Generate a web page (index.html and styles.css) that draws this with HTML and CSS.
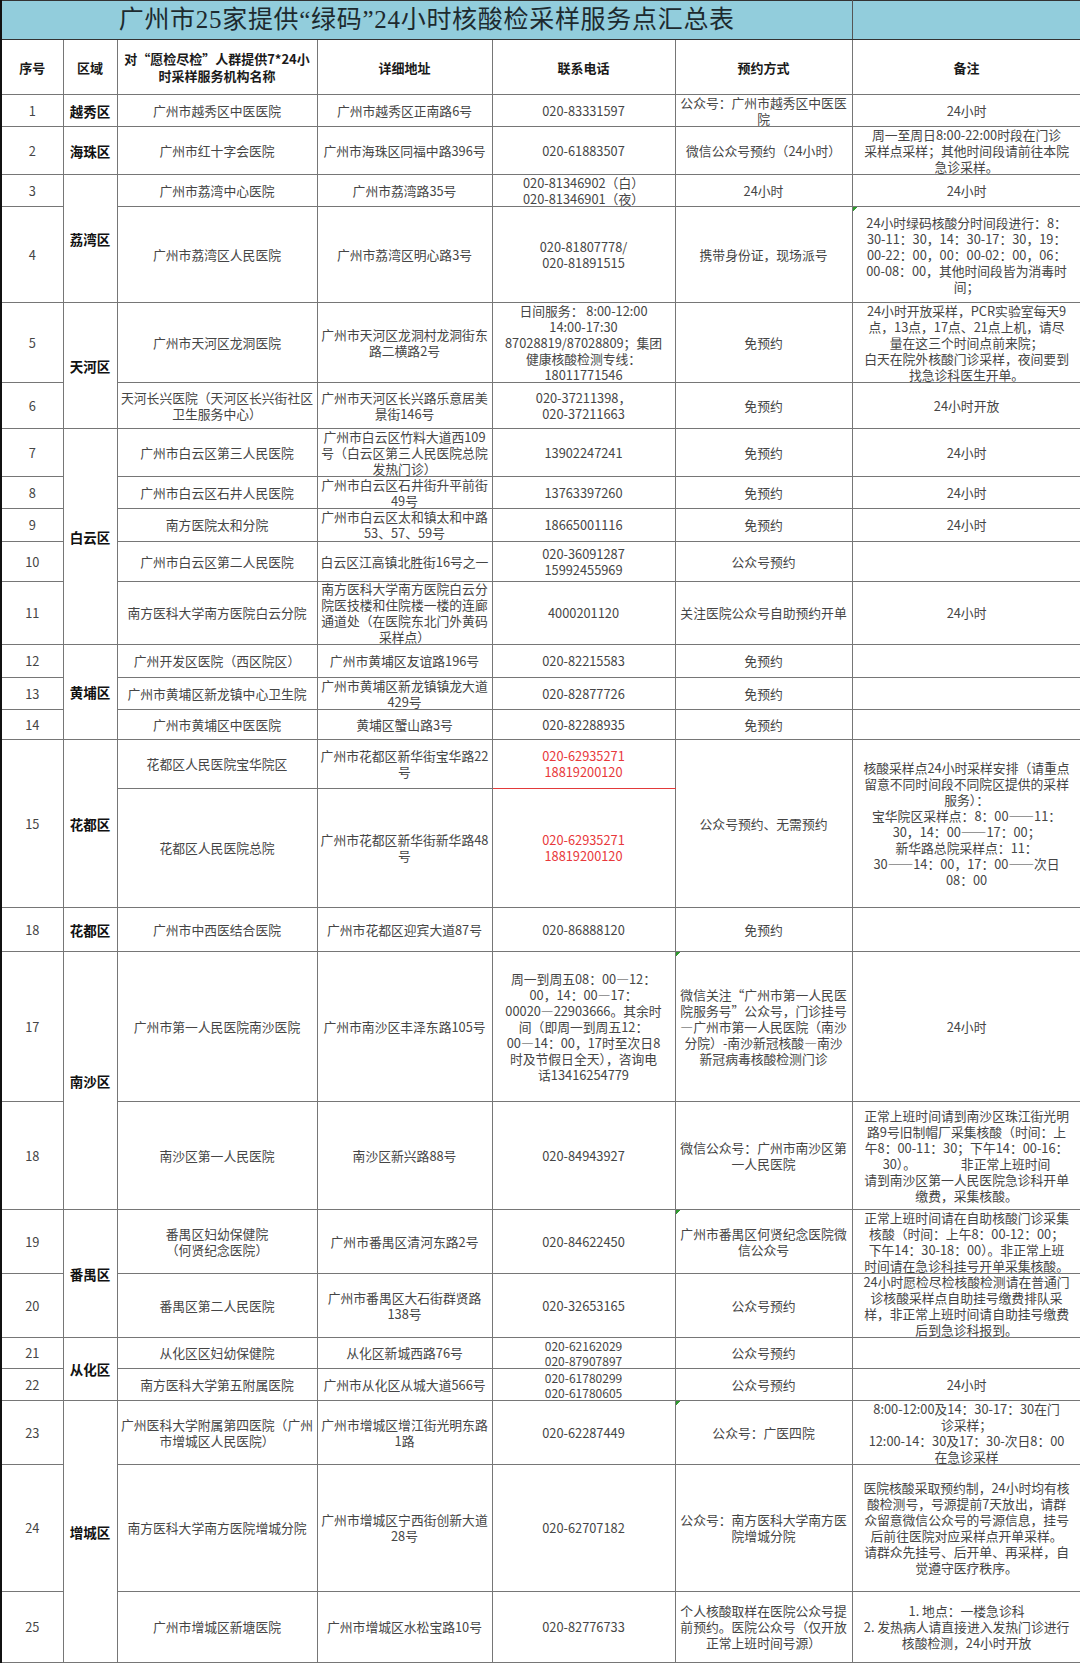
FILE: index.html
```html
<!DOCTYPE html>
<html lang="zh-CN">
<head>
<meta charset="utf-8">
<title>广州市25家提供“绿码”24小时核酸检采样服务点汇总表</title>
<link rel="stylesheet" href="styles.css">
</head>
<body>
<table class="sheet">
  <colgroup>
    <col class="c-seq"><col class="c-area"><col class="c-name"><col class="c-addr"><col class="c-tel"><col class="c-book"><col class="c-note">
  </colgroup>
  <tbody>
    <tr class="title h39">
      <td colspan="6" class="title-cell">广州市25家提供“绿码”24小时核酸检采样服务点汇总表</td>
      <td class="title-side"></td>
    </tr>
    <tr class="head h55">
      <td class="first">序号</td>
      <td>区域</td>
      <td>对“愿检尽检”人群提供7*24小<br>时采样服务机构名称</td>
      <td>详细地址</td>
      <td>联系电话</td>
      <td>预约方式</td>
      <td>备注</td>
    </tr>
    <tr class="h32">
      <td class="first">1</td>
      <td class="area">越秀区</td>
      <td>广州市越秀区中医医院</td>
      <td>广州市越秀区正南路6号</td>
      <td>020-83331597</td>
      <td><div class="fit">公众号：广州市越秀区中医医<br>院</div></td>
      <td>24小时</td>
    </tr>
    <tr class="h48">
      <td class="first">2</td>
      <td class="area">海珠区</td>
      <td>广州市红十字会医院</td>
      <td>广州市海珠区同福中路396号</td>
      <td>020-61883507</td>
      <td>微信公众号预约（24小时）</td>
      <td><div class="fit">周一至周日8:00-22:00时段在门诊<br>采样点采样；其他时间段请前往本院<br>急诊采样。</div></td>
    </tr>
    <tr class="h32">
      <td class="first">3</td>
      <td class="area" rowspan="2">荔湾区</td>
      <td>广州市荔湾中心医院</td>
      <td>广州市荔湾路35号</td>
      <td><div class="fit">020-81346902（白）<br>020-81346901（夜）</div></td>
      <td>24小时</td>
      <td>24小时</td>
    </tr>
    <tr class="h96">
      <td class="first">4</td>
      <td>广州市荔湾区人民医院</td>
      <td>广州市荔湾区明心路3号</td>
      <td>020-81807778/<br>020-81891515</td>
      <td>携带身份证，现场派号</td>
      <td class="note-flag">24小时绿码核酸分时间段进行：8：<br>30-11：30，14：30-17：30，19：<br>00-22：00，00：00-02：00，06：<br>00-08：00，其他时间段皆为消毒时<br>间；</td>
    </tr>
    <tr class="h80">
      <td class="first">5</td>
      <td class="area" rowspan="2">天河区</td>
      <td>广州市天河区龙洞医院</td>
      <td>广州市天河区龙洞村龙洞街东<br>路二横路2号</td>
      <td><div class="fit">日间服务： 8:00-12:00<br>14:00-17:30<br>87028819/87028809；集团<br>健康核酸检测专线：<br>18011771546</div></td>
      <td>免预约</td>
      <td><div class="fit">24小时开放采样，PCR实验室每天9<br>点，13点，17点、21点上机，请尽<br>量在这三个时间点前来院；<br>白天在院外核酸门诊采样，夜间要到<br>找急诊科医生开单。</div></td>
    </tr>
    <tr class="h46">
      <td class="first">6</td>
      <td>天河长兴医院（天河区长兴街社区<br>卫生服务中心）</td>
      <td>广州市天河区长兴路乐意居美<br>景街146号</td>
      <td>020-37211398，<br>020-37211663</td>
      <td>免预约</td>
      <td>24小时开放</td>
    </tr>
    <tr class="h48">
      <td class="first">7</td>
      <td class="area" rowspan="5">白云区</td>
      <td>广州市白云区第三人民医院</td>
      <td><div class="fit">广州市白云区竹料大道西109<br>号（白云区第三人民医院总院<br>发热门诊）</div></td>
      <td>13902247241</td>
      <td>免预约</td>
      <td>24小时</td>
    </tr>
    <tr class="h32">
      <td class="first">8</td>
      <td>广州市白云区石井人民医院</td>
      <td><div class="fit">广州市白云区石井街升平前街<br>49号</div></td>
      <td>13763397260</td>
      <td>免预约</td>
      <td>24小时</td>
    </tr>
    <tr class="h33">
      <td class="first">9</td>
      <td>南方医院太和分院</td>
      <td><div class="fit">广州市白云区太和镇太和中路<br>53、57、59号</div></td>
      <td>18665001116</td>
      <td>免预约</td>
      <td>24小时</td>
    </tr>
    <tr class="h40">
      <td class="first">10</td>
      <td>广州市白云区第二人民医院</td>
      <td>白云区江高镇北胜街16号之一</td>
      <td>020-36091287<br>15992455969</td>
      <td>公众号预约</td>
      <td></td>
    </tr>
    <tr class="h63">
      <td class="first">11</td>
      <td>南方医科大学南方医院白云分院</td>
      <td><div class="fit">南方医科大学南方医院白云分<br>院医技楼和住院楼一楼的连廊<br>通道处（在医院东北门外黄码<br>采样点）</div></td>
      <td>4000201120</td>
      <td>关注医院公众号自助预约开单</td>
      <td>24小时</td>
    </tr>
    <tr class="h33">
      <td class="first">12</td>
      <td class="area" rowspan="3">黄埔区</td>
      <td>广州开发区医院（西区院区）</td>
      <td>广州市黄埔区友谊路196号</td>
      <td>020-82215583</td>
      <td>免预约</td>
      <td></td>
    </tr>
    <tr class="h32">
      <td class="first">13</td>
      <td>广州市黄埔区新龙镇中心卫生院</td>
      <td><div class="fit">广州市黄埔区新龙镇镇龙大道<br>429号</div></td>
      <td>020-82877726</td>
      <td>免预约</td>
      <td></td>
    </tr>
    <tr class="h30">
      <td class="first">14</td>
      <td>广州市黄埔区中医医院</td>
      <td>黄埔区蟹山路3号</td>
      <td>020-82288935</td>
      <td>免预约</td>
      <td></td>
    </tr>
    <tr class="h49">
      <td class="first" rowspan="2">15</td>
      <td class="area" rowspan="2">花都区</td>
      <td>花都区人民医院宝华院区</td>
      <td>广州市花都区新华街宝华路22<br>号</td>
      <td class="red red-bottom">020-62935271<br>18819200120</td>
      <td rowspan="2">公众号预约、无需预约</td>
      <td rowspan="2">核酸采样点24小时采样安排（请重点<br>留意不同时间段不同院区提供的采样<br>服务）：<br>宝华院区采样点：8：00——11：<br>30，14：00——17：00；<br>新华路总院采样点：11：<br>30——14：00，17：00——次日<br>08：00</td>
    </tr>
    <tr class="h119">
      <td>花都区人民医院总院</td>
      <td>广州市花都区新华街新华路48<br>号</td>
      <td class="red">020-62935271<br>18819200120</td>
    </tr>
    <tr class="h44">
      <td class="first">18</td>
      <td class="area">花都区</td>
      <td>广州市中西医结合医院</td>
      <td>广州市花都区迎宾大道87号</td>
      <td>020-86888120</td>
      <td>免预约</td>
      <td></td>
    </tr>
    <tr class="h150 thick">
      <td class="first">17</td>
      <td class="area" rowspan="2">南沙区</td>
      <td>广州市第一人民医院南沙医院</td>
      <td>广州市南沙区丰泽东路105号</td>
      <td>周一到周五08：00—12：<br>00，14：00—17：<br>00020—22903666。其余时<br>间（即周一到周五12：<br>00—14：00，17时至次日8<br>时及节假日全天），咨询电<br>话13416254779</td>
      <td class="note-flag">微信关注“广州市第一人民医<br>院服务号”公众号，门诊挂号<br>—广州市第一人民医院（南沙<br>分院）-南沙新冠核酸—南沙<br>新冠病毒核酸检测门诊</td>
      <td>24小时</td>
    </tr>
    <tr class="h108 thick">
      <td class="first">18</td>
      <td>南沙区第一人民医院</td>
      <td>南沙区新兴路88号</td>
      <td>020-84943927</td>
      <td>微信公众号：广州市南沙区第<br>一人民医院</td>
      <td>正常上班时间请到南沙区珠江街光明<br>路9号旧制帽厂采集核酸（时间：上<br>午8：00-11：30；下午14：00-16：<br>30）。&emsp;&emsp;&emsp;&ensp;非正常上班时间<br>请到南沙区第一人民医院急诊科开单<br>缴费，采集核酸。</td>
    </tr>
    <tr class="h64">
      <td class="first">19</td>
      <td class="area" rowspan="2">番禺区</td>
      <td>番禺区妇幼保健院<br>（何贤纪念医院）</td>
      <td>广州市番禺区清河东路2号</td>
      <td>020-84622450</td>
      <td class="note-flag">广州市番禺区何贤纪念医院微<br>信公众号</td>
      <td><div class="fit">正常上班时间请在自助核酸门诊采集<br>核酸（时间：上午8：00-12：00；<br>下午14：30-18：00）。非正常上班<br>时间请在急诊科挂号开单采集核酸。</div></td>
    </tr>
    <tr class="h64">
      <td class="first">20</td>
      <td>番禺区第二人民医院</td>
      <td>广州市番禺区大石街群贤路<br>138号</td>
      <td>020-32653165</td>
      <td>公众号预约</td>
      <td><div class="fit">24小时愿检尽检核酸检测请在普通门<br>诊核酸采样点自助挂号缴费排队采<br>样，非正常上班时间请自助挂号缴费<br>后到急诊科报到。</div></td>
    </tr>
    <tr class="h31">
      <td class="first">21</td>
      <td class="area" rowspan="2">从化区</td>
      <td>从化区区妇幼保健院</td>
      <td>从化区新城西路76号</td>
      <td class="small">020-62162029<br>020-87907897</td>
      <td>公众号预约</td>
      <td></td>
    </tr>
    <tr class="h32">
      <td class="first">22</td>
      <td>南方医科大学第五附属医院</td>
      <td>广州市从化区从城大道566号</td>
      <td class="small">020-61780299<br>020-61780605</td>
      <td>公众号预约</td>
      <td>24小时</td>
    </tr>
    <tr class="h64 thick">
      <td class="first">23</td>
      <td class="area" rowspan="3">增城区</td>
      <td>广州医科大学附属第四医院（广州<br>市增城区人民医院）</td>
      <td>广州市增城区增江街光明东路<br>1路</td>
      <td>020-62287449</td>
      <td class="note-flag">公众号：广医四院</td>
      <td><div class="fit">8:00-12:00及14：30-17：30在门<br>诊采样；<br>12:00-14：30及17：30-次日8：00<br>在急诊采样</div></td>
    </tr>
    <tr class="h127">
      <td class="first">24</td>
      <td>南方医科大学南方医院增城分院</td>
      <td>广州市增城区宁西街创新大道<br>28号</td>
      <td>020-62707182</td>
      <td>公众号：南方医科大学南方医<br>院增城分院</td>
      <td>医院核酸采取预约制，24小时均有核<br>酸检测号，号源提前7天放出，请群<br>众留意微信公众号的号源信息，挂号<br>后前往医院对应采样点开单采样。<br>请群众先挂号、后开单、再采样，自<br>觉遵守医疗秩序。</td>
    </tr>
    <tr class="h71">
      <td class="first">25</td>
      <td>广州市增城区新塘医院</td>
      <td>广州市增城区水松宝路10号</td>
      <td>020-82776733</td>
      <td>个人核酸取样在医院公众号提<br>前预约。医院公众号（仅开放<br>正常上班时间号源）</td>
      <td>1. 地点：一楼急诊科<br>2. 发热病人请直接进入发热门诊进行<br>核酸检测，24小时开放</td>
    </tr>
  </tbody>
</table>
</body>
</html>
```

FILE: styles.css
```css
* {
  box-sizing: border-box;
}

html,
body {
  margin: 0;
  padding: 0;
  background: #ffffff;
}

body {
  width: 1080px;
  font-family: "Noto Sans CJK SC", "Liberation Sans", sans-serif;
}

.sheet {
  width: 1080px;
  border-collapse: collapse;
  table-layout: fixed;
}

.c-seq { width: 62px; }
.c-area { width: 54px; }
.c-name { width: 200px; }
.c-addr { width: 175px; }
.c-tel { width: 183px; }
.c-book { width: 177px; }
.c-note { width: 229px; }

.sheet td {
  border: 1px solid #767676;
  padding: 0 2px;
  text-align: center;
  vertical-align: middle;
  font-size: 12.8px;
  line-height: 16px;
  color: #454545;
  white-space: nowrap;
}

/* multi-line text that fills its row completely (as in the sheet) */
.fit {
  margin: -1px 0;
}

.sheet td.small {
  font-size: 12px;
  line-height: 15px;
}

.sheet td.first {
  border-left: 2px solid #111111;
}

/* title row */
.sheet .title td {
  background: #92cddc;
  border-top: 1px solid #333333;
  border-bottom: 1px solid #333333;
}

.sheet .title .title-cell {
  border-left: 2px solid #111111;
  border-right: 1px solid #555555;
  font-family: "Liberation Serif", "Noto Sans CJK SC", serif;
  font-size: 25px;
  line-height: 30px;
  color: #1d2a2f;
  letter-spacing: 0.7px;
}

/* header row */
.sheet .head td {
  font-weight: 700;
  font-size: 13px;
  color: #1a1a1a;
  line-height: 17px;
}

.sheet td.area {
  font-weight: 700;
  font-size: 13.5px;
  color: #111111;
}

.sheet td.red {
  color: #e8383b;
}

.sheet td.red-bottom {
  border-bottom: 1px solid #e23a3a;
}

.sheet td.note-flag {
  background-image: linear-gradient(135deg, #2f9a2f 0, #2f9a2f 3px, transparent 3px);
  background-repeat: no-repeat;
}

.sheet tr.thick td {
  border-top-color: #8e8e8e;
}

/* row heights (pitch of the spreadsheet rows) */
.h30 { height: 30px; }
.h31 { height: 31px; }
.h32 { height: 32px; }
.h33 { height: 33px; }
.h39 { height: 39px; }
.h40 { height: 40px; }
.h44 { height: 44px; }
.h46 { height: 46px; }
.h48 { height: 48px; }
.h49 { height: 49px; }
.h55 { height: 55px; }
.h63 { height: 63px; }
.h64 { height: 64px; }
.h71 { height: 71px; }
.h80 { height: 80px; }
.h96 { height: 96px; }
.h108 { height: 108px; }
.h119 { height: 119px; }
.h127 { height: 127px; }
.h150 { height: 150px; }
```
